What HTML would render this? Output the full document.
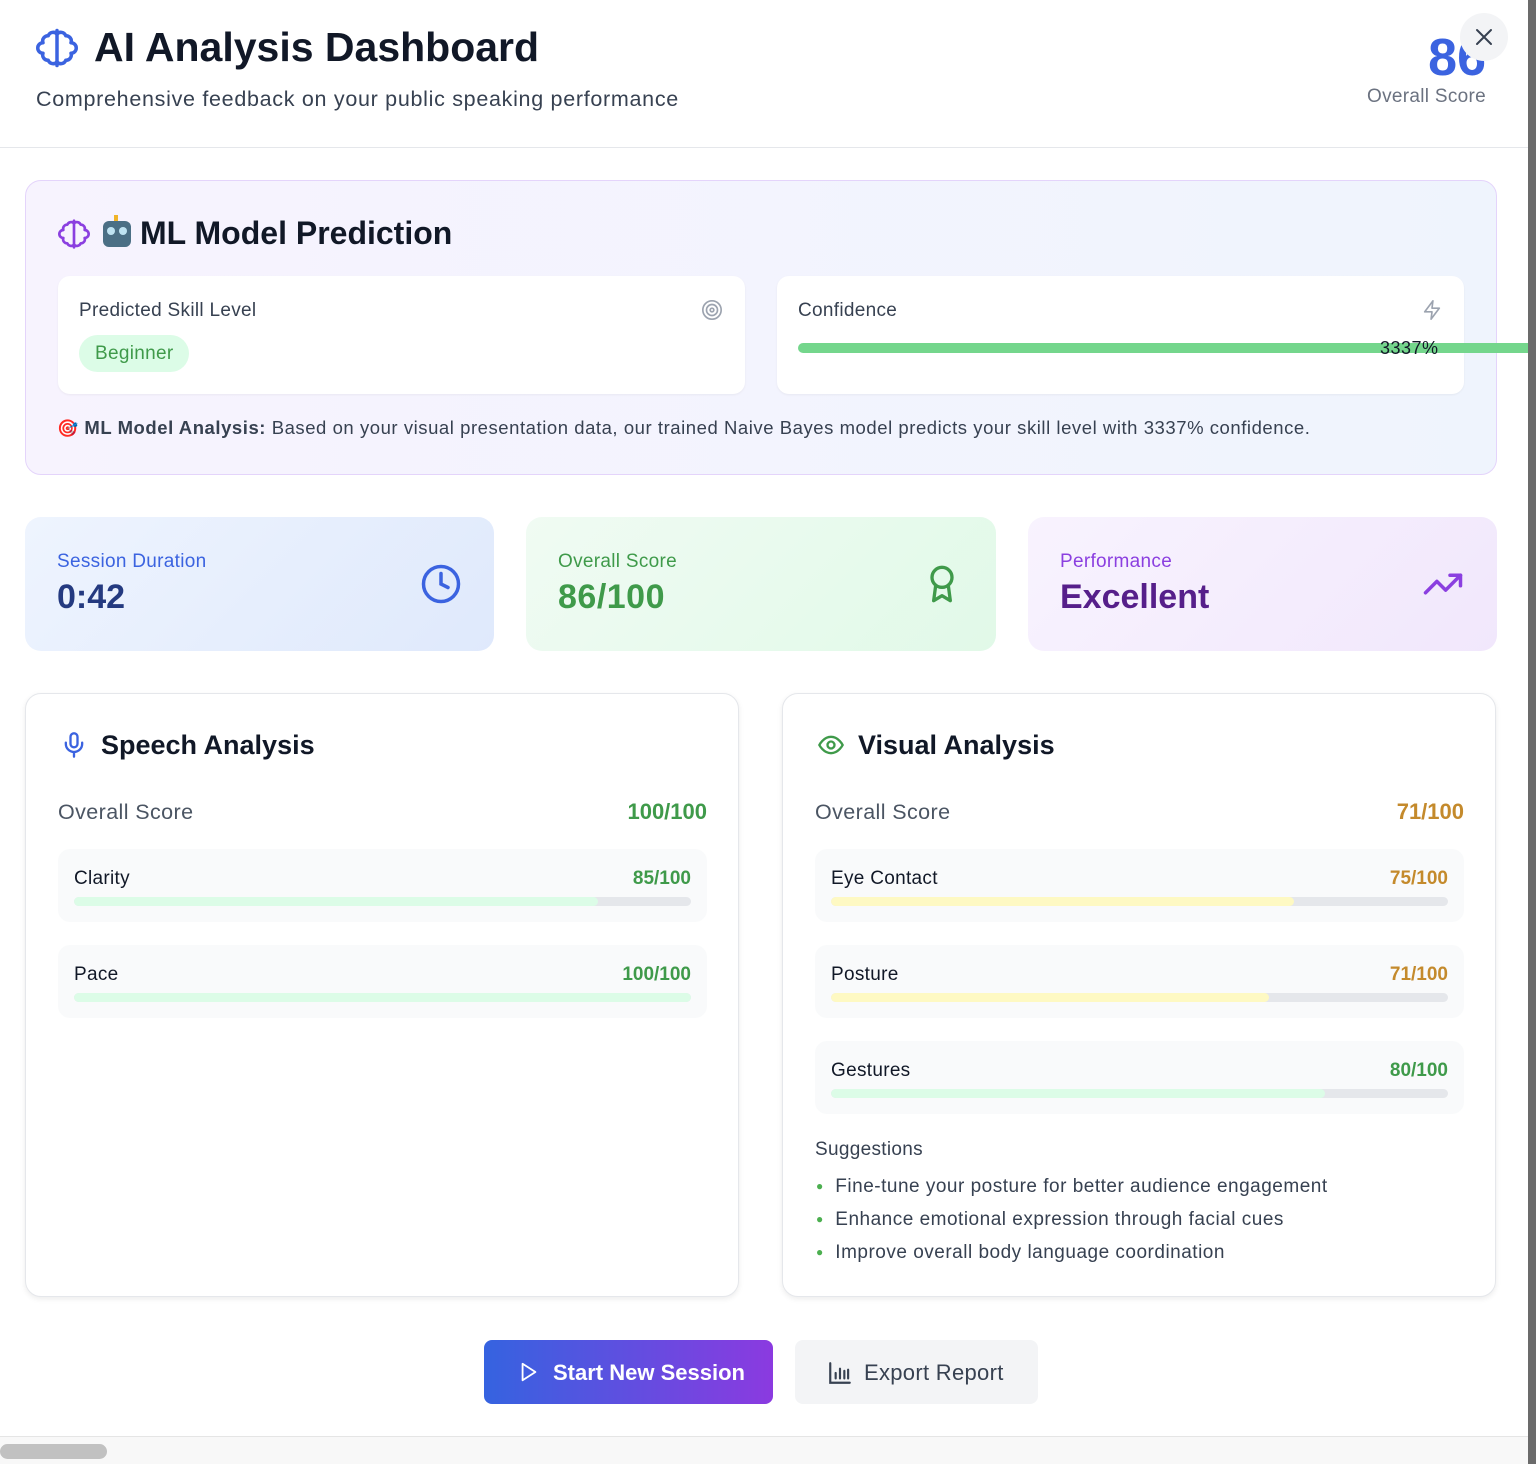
<!DOCTYPE html>
<html><head><meta charset="utf-8"><style>
*{box-sizing:border-box;margin:0;padding:0}
body{width:1536px;height:1464px;overflow:hidden;background:#fff;font-family:"Liberation Sans","Noto Sans CJK JP",sans-serif;position:relative;color:#111827}
.a{position:absolute}
.strip{left:1528px;top:0;width:8px;height:1464px;background:#6b6b6b}
.t{white-space:nowrap}
.card{border-radius:12px}
.ls{letter-spacing:0.5px}
.item{background:#f9fafb;border-radius:12px;height:73px}
.item .l{left:16px;top:19px;font-size:19px;color:#111827;letter-spacing:0.3px}
.item .r{right:16px;top:19px;font-size:19px;font-weight:bold}
.item .bar{left:16px;right:16px;top:48px;height:9px;background:#e5e7eb;border-radius:5px;overflow:hidden}
.item .bar div{height:100%;border-radius:5px}
</style></head><body>
<div class="a strip"></div>
<!-- header -->
<svg class="a" style="left:36px;top:27px" width="42" height="42" viewBox="0 0 24 24" fill="none" stroke="#3b63e0" stroke-width="2" stroke-linecap="round" stroke-linejoin="round"><path d="M12 2v20"/><path d="M12 4a3 3 0 0 0-5 1 3 3 0 0 0-3 4 3 3 0 0 0 0 6 3 3 0 0 0 3 4 3 3 0 0 0 5 1"/><path d="M12 4a3 3 0 0 1 5 1 3 3 0 0 1 3 4 3 3 0 0 1 0 6 3 3 0 0 1-3 4 3 3 0 0 1-5 1"/></svg>
<div class="a t" style="left:94px;top:24px;font-size:41px;font-weight:bold;color:#111827">AI Analysis Dashboard</div>
<div class="a t ls" style="left:36px;top:87px;font-size:21.5px;color:#374151;letter-spacing:0.7px">Comprehensive feedback on your public speaking performance</div>
<div class="a t" style="right:50px;top:28px;font-size:52px;font-weight:bold;color:#3b63e0;line-height:60px">86</div>
<div class="a t" style="right:50px;top:86px;font-size:19px;color:#6b7280;letter-spacing:0.3px">Overall Score</div>
<div class="a" style="left:1460px;top:13px;width:48px;height:48px;border-radius:24px;background:#f3f4f6"></div>
<svg class="a" style="left:1472px;top:25px" width="24" height="24" viewBox="0 0 24 24" stroke="#374151" stroke-width="2" stroke-linecap="round"><path d="M5 5l14 14M19 5L5 19"/></svg>
<div class="a" style="left:0;top:147px;width:1528px;height:1px;background:#e5e7eb"></div>

<!-- ML card -->
<div class="a" style="left:25px;top:180px;width:1472px;height:295px;border:1px solid #e4d4fb;border-radius:16px;background:linear-gradient(90deg,#f7f3fe,#eff4fd)"></div>
<svg class="a" style="left:58px;top:218px" width="32" height="32" viewBox="0 0 24 24" fill="none" stroke="#8b3fe0" stroke-width="2" stroke-linecap="round" stroke-linejoin="round"><path d="M12 2v20"/><path d="M12 4a3 3 0 0 0-5 1 3 3 0 0 0-3 4 3 3 0 0 0 0 6 3 3 0 0 0 3 4 3 3 0 0 0 5 1"/><path d="M12 4a3 3 0 0 1 5 1 3 3 0 0 1 3 4 3 3 0 0 1 0 6 3 3 0 0 1-3 4 3 3 0 0 1-5 1"/></svg>
<div class="a" style="left:103px;top:221px;width:28px;height:26px;border-radius:6px;background:#4b6f85"></div>
<div class="a" style="left:107px;top:227px;width:8px;height:8px;border-radius:4px;background:#bfe3f2"></div>
<div class="a" style="left:119px;top:227px;width:8px;height:8px;border-radius:4px;background:#bfe3f2"></div>
<div class="a" style="left:114px;top:215px;width:4px;height:6px;background:#f0b429"></div>
<div class="a t" style="left:140px;top:215px;font-size:32px;font-weight:bold;color:#111827">ML Model Prediction</div>

<div class="a card" style="left:58px;top:276px;width:687px;height:118px;background:#fff;box-shadow:0 1px 2px rgba(0,0,0,.05)"></div>
<div class="a t" style="left:79px;top:300px;font-size:19px;color:#374151;letter-spacing:0.3px">Predicted Skill Level</div>
<svg class="a" style="left:701px;top:299px" width="22" height="22" viewBox="0 0 24 24" fill="none" stroke="#9ca3af" stroke-width="1.8"><circle cx="12" cy="12" r="10"/><circle cx="12" cy="12" r="6"/><circle cx="12" cy="12" r="2"/></svg>
<div class="a t" style="left:79px;top:335px;height:37px;padding:0 16px;border-radius:19px;background:#dcfce7;color:#3f9a4a;font-size:19px;line-height:37px;letter-spacing:0.3px">Beginner</div>

<div class="a card" style="left:777px;top:276px;width:687px;height:118px;background:#fff;box-shadow:0 1px 2px rgba(0,0,0,.05)"></div>
<div class="a t" style="left:798px;top:300px;font-size:19px;color:#374151;letter-spacing:0.3px">Confidence</div>
<svg class="a" style="left:1421px;top:299px" width="22" height="22" viewBox="0 0 24 24" fill="none" stroke="#9ca3af" stroke-width="1.8" stroke-linejoin="round"><path d="M13 2L4 14h8l-1 8 9-12h-8z"/></svg>
<div class="a" style="left:798px;top:343px;width:730px;height:10px;background:#74d68c;border-radius:5px 0 0 5px"></div>
<div class="a t" style="left:1380px;top:338px;font-size:18px;color:#111827;letter-spacing:0.5px">3337%</div>
<div class="a t" style="left:57px;top:417px;font-size:18.5px;color:#374151;letter-spacing:0.55px"><span style="font-size:17px">🎯</span> <b>ML Model Analysis:</b> Based on your visual presentation data, our trained Naive Bayes model predicts your skill level with 3337% confidence.</div>

<!-- stat cards -->
<div class="a" style="left:25px;top:517px;width:469px;height:134px;border-radius:16px;background:linear-gradient(135deg,#eef4fe,#dfe9fc)"></div>
<div class="a t" style="left:57px;top:551px;font-size:19px;color:#3b63e0;letter-spacing:0.3px">Session Duration</div>
<div class="a t" style="left:57px;top:578px;font-size:34px;font-weight:bold;color:#243a80">0:42</div>
<svg class="a" style="left:420px;top:563px" width="42" height="42" viewBox="0 0 24 24" fill="none" stroke="#3b63e0" stroke-width="2" stroke-linecap="round"><circle cx="12" cy="12" r="10"/><path d="M12 6v6l4 2"/></svg>

<div class="a" style="left:526px;top:517px;width:470px;height:134px;border-radius:16px;background:linear-gradient(135deg,#f0fbf3,#e1f9e8)"></div>
<div class="a t" style="left:558px;top:551px;font-size:19px;color:#3f9a4a;letter-spacing:0.3px">Overall Score</div>
<div class="a t" style="left:558px;top:578px;font-size:34px;font-weight:bold;color:#3f9a4a;letter-spacing:0.5px">86/100</div>
<svg class="a" style="left:922px;top:563px" width="40" height="42" viewBox="0 0 24 24" fill="none" stroke="#3f9a4a" stroke-width="2" stroke-linejoin="round"><circle cx="12" cy="8" r="6"/><path d="M8.2 13L7 22l5-3 5 3-1.2-9"/></svg>

<div class="a" style="left:1028px;top:517px;width:469px;height:134px;border-radius:16px;background:linear-gradient(135deg,#f8f3fe,#f1e7fc)"></div>
<div class="a t" style="left:1060px;top:551px;font-size:19px;color:#8b3fe0;letter-spacing:0.3px">Performance</div>
<div class="a t" style="left:1060px;top:578px;font-size:34px;font-weight:bold;color:#561f8a">Excellent</div>
<svg class="a" style="left:1422px;top:563px" width="42" height="42" viewBox="0 0 24 24" fill="none" stroke="#8b3fe0" stroke-width="2" stroke-linecap="round" stroke-linejoin="round"><path d="M22 7l-8.5 8.5-5-5L2 17"/><path d="M16 7h6v6"/></svg>

<!-- speech -->
<div class="a" style="left:25px;top:693px;width:714px;height:604px;border:1px solid #e5e7eb;border-radius:16px;background:#fff;box-shadow:0 2px 6px rgba(0,0,0,.08)"></div>
<svg class="a" style="left:60px;top:730px" width="28" height="30" viewBox="0 0 24 24" fill="none" stroke="#3b63e0" stroke-width="2" stroke-linecap="round"><rect x="9" y="2" width="6" height="12" rx="3"/><path d="M19 10v1a7 7 0 0 1-14 0v-1M12 18v4"/></svg>
<div class="a t" style="left:101px;top:730px;font-size:27px;font-weight:bold">Speech Analysis</div>
<div class="a t" style="left:58px;top:800px;font-size:21.5px;color:#4b5563;letter-spacing:0.4px">Overall Score</div>
<div class="a t" style="right:829px;top:799px;font-size:22px;font-weight:bold;color:#3f9a4a">100/100</div>
<div class="a item" style="left:58px;top:849px;width:649px"><div class="a l t">Clarity</div><div class="a r t" style="color:#3f9a4a">85/100</div><div class="a bar"><div style="width:85%;background:#dcfce7"></div></div></div>
<div class="a item" style="left:58px;top:945px;width:649px"><div class="a l t">Pace</div><div class="a r t" style="color:#3f9a4a">100/100</div><div class="a bar"><div style="width:100%;background:#dcfce7"></div></div></div>

<!-- visual -->
<div class="a" style="left:782px;top:693px;width:714px;height:604px;border:1px solid #e5e7eb;border-radius:16px;background:#fff;box-shadow:0 2px 6px rgba(0,0,0,.08)"></div>
<svg class="a" style="left:816px;top:731px" width="30" height="28" viewBox="0 0 24 24" fill="none" stroke="#3f9a4a" stroke-width="2"><path d="M2 12s3.5-7 10-7 10 7 10 7-3.5 7-10 7S2 12 2 12z"/><circle cx="12" cy="12" r="3"/></svg>
<div class="a t" style="left:858px;top:730px;font-size:27px;font-weight:bold">Visual Analysis</div>
<div class="a t" style="left:815px;top:800px;font-size:21.5px;color:#4b5563;letter-spacing:0.4px">Overall Score</div>
<div class="a t" style="right:72px;top:799px;font-size:22px;font-weight:bold;color:#c48a2c">71/100</div>
<div class="a item" style="left:815px;top:849px;width:649px"><div class="a l t">Eye Contact</div><div class="a r t" style="color:#c48a2c">75/100</div><div class="a bar"><div style="width:75%;background:#fef9c3"></div></div></div>
<div class="a item" style="left:815px;top:945px;width:649px"><div class="a l t">Posture</div><div class="a r t" style="color:#c48a2c">71/100</div><div class="a bar"><div style="width:71%;background:#fef9c3"></div></div></div>
<div class="a item" style="left:815px;top:1041px;width:649px"><div class="a l t">Gestures</div><div class="a r t" style="color:#3f9a4a">80/100</div><div class="a bar"><div style="width:80%;background:#dcfce7"></div></div></div>
<div class="a t" style="left:815px;top:1139px;font-size:19px;color:#374151;letter-spacing:0.3px">Suggestions</div>
<div class="a t" style="left:816px;top:1170px;font-size:19px;color:#374151;line-height:32px;letter-spacing:0.5px">
<div><span style="color:#4caf50;font-size:12px;vertical-align:2px">●</span>&nbsp;&nbsp;Fine-tune your posture for better audience engagement</div>
<div><span style="color:#4caf50;font-size:12px;vertical-align:2px">●</span>&nbsp;&nbsp;Enhance emotional expression through facial cues</div>
<div><span style="color:#4caf50;font-size:12px;vertical-align:2px">●</span>&nbsp;&nbsp;Improve overall body language coordination</div>
</div>

<!-- buttons -->
<div class="a" style="left:484px;top:1340px;width:289px;height:64px;border-radius:8px;background:linear-gradient(90deg,#3563e0,#8b3ae0)"></div>
<svg class="a" style="left:518px;top:1360px" width="22" height="24" viewBox="0 0 24 24" fill="none" stroke="#fff" stroke-width="2" stroke-linejoin="round"><path d="M5 3l14 9-14 9z"/></svg>
<div class="a t" style="left:553px;top:1360px;font-size:22px;color:#fff;font-weight:bold">Start New Session</div>
<div class="a" style="left:795px;top:1340px;width:243px;height:64px;border-radius:8px;background:#f3f4f6"></div>
<svg class="a" style="left:827px;top:1360px" width="26" height="26" viewBox="0 0 24 24" fill="none" stroke="#374151" stroke-width="2" stroke-linecap="round"><path d="M3 3v18h18M8 17v-5M12 17V8M16 17v-7M19.5 17V9"/></svg>
<div class="a t" style="left:864px;top:1360px;font-size:22px;color:#374151;letter-spacing:0.3px">Export Report</div>

<div class="a" style="left:0;top:1436px;width:1528px;height:28px;background:#f8f8f8;border-top:1px solid #e5e5e5"></div>
<div class="a" style="left:0;top:1444px;width:107px;height:15px;border-radius:8px;background:#c1c1c1"></div>
</body></html>
